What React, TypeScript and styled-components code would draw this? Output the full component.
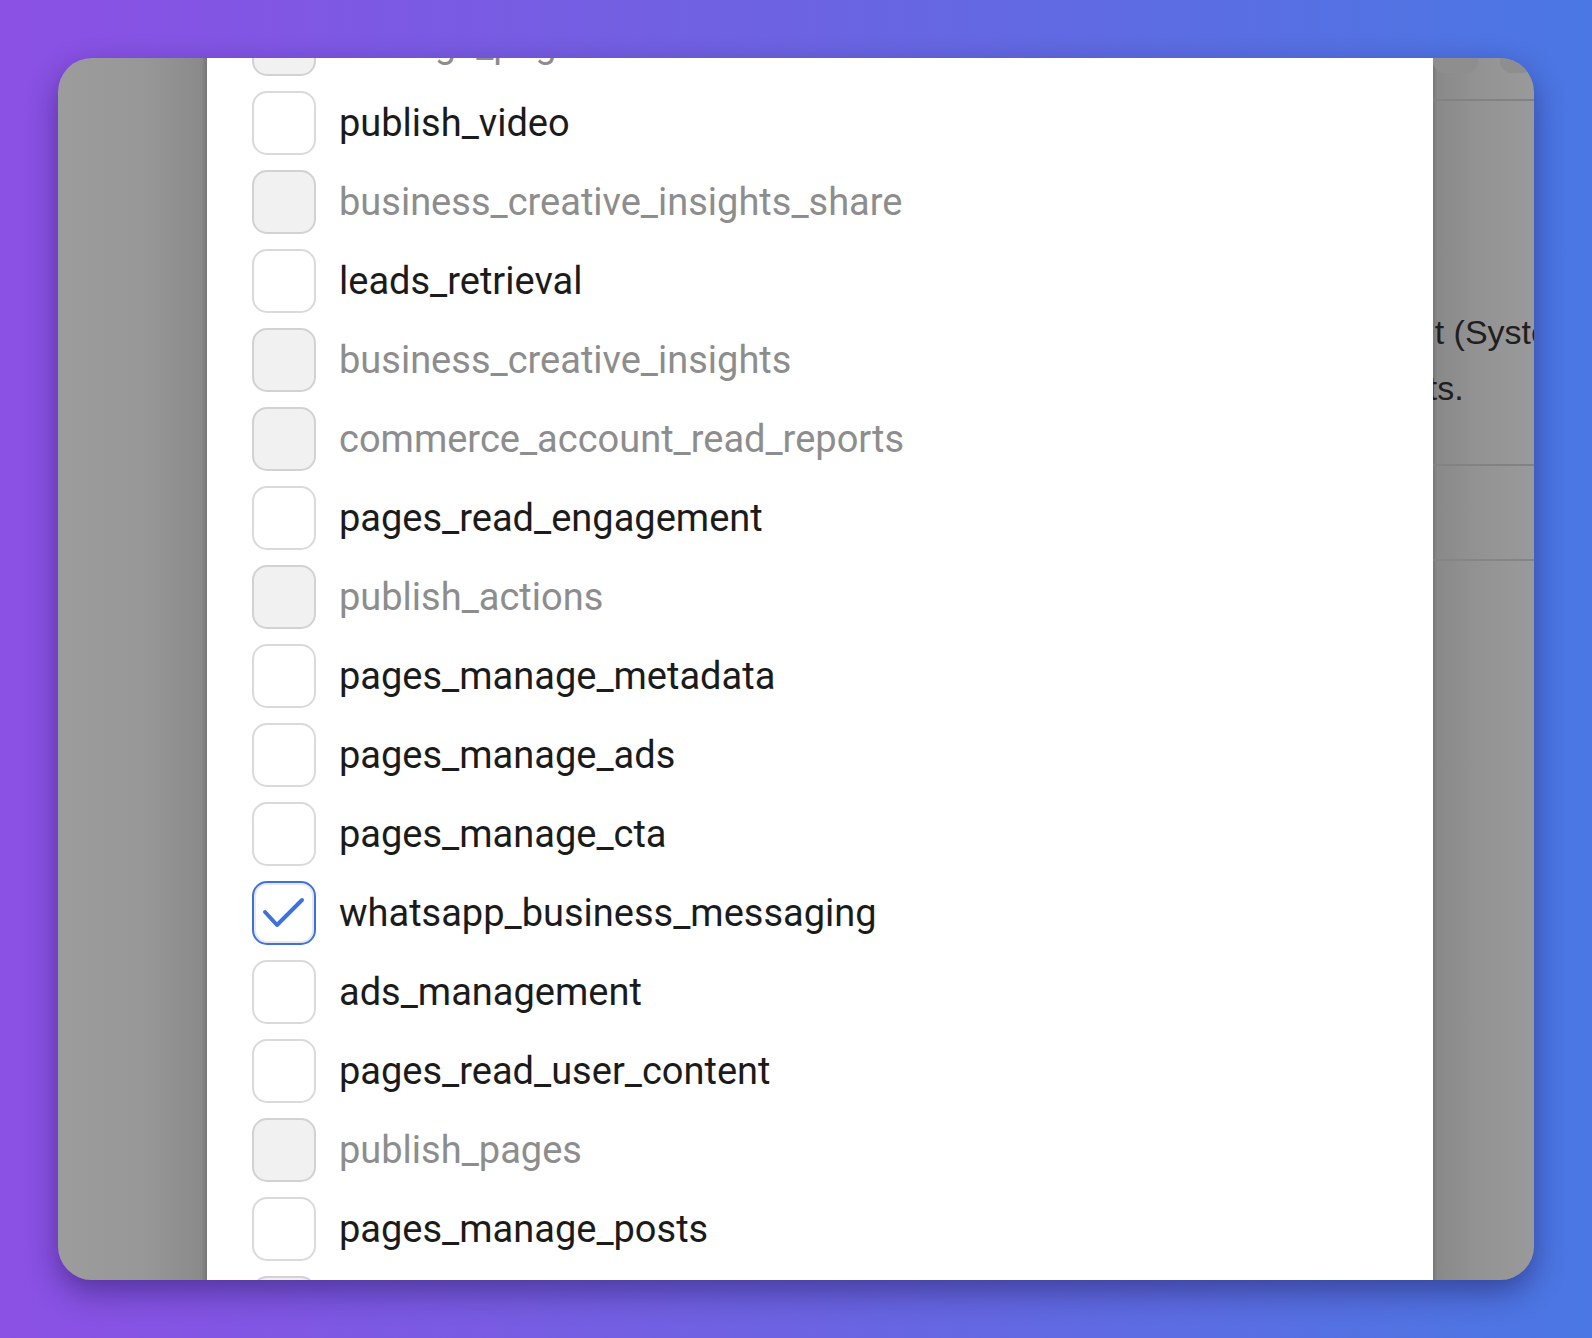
import * as React from "react";
import styled, { createGlobalStyle } from "styled-components";

const GlobalStyle = createGlobalStyle`
  html, body {
    margin: 0;
    padding: 0;
  }
  body {
    width: 1592px;
    height: 1338px;
    overflow: hidden;
    font-family: Roboto, "Liberation Sans", sans-serif;
  }
`;

const Page = styled.div`
  width: 1592px;
  height: 1338px;
  box-sizing: border-box;
  padding: 58px;
  background: linear-gradient(90deg, #8b50e4 0%, #6c63e2 50%, #4a77e3 100%);
`;

const Window = styled.div`
  display: flex;
  height: 100%;
  border-radius: 34px;
  overflow: hidden;
  box-shadow: 0 12px 30px rgba(25, 15, 70, 0.45);
`;

const LeftPane = styled.div`
  width: 149px;
  flex-shrink: 0;
  background: linear-gradient(90deg, #9c9c9c 0%, #979797 60%, #8a8a8a 96%, #767676 100%);
`;

const Modal = styled.div`
  flex: 1;
  background: #ffffff;
  overflow: hidden;
  padding-left: 45px;
`;

const List = styled.ul`
  list-style: none;
  margin: -54px 0 0;
  padding: 0;
`;

const Row = styled.li`
  display: flex;
  align-items: center;
  gap: 23px;
  height: 79px;
`;

const Box = styled.span<{ $disabled?: boolean; $checked?: boolean }>`
  box-sizing: border-box;
  width: 64px;
  height: 64px;
  flex-shrink: 0;
  border-radius: 15px;
  display: flex;
  align-items: center;
  justify-content: center;
  border: 2px solid
    ${({ $checked, $disabled }) =>
      $checked ? "#3f70e0" : $disabled ? "#d2d2d2" : "#dadada"};
  background: ${({ $disabled }) => ($disabled ? "#f1f1f1" : "#ffffff")};
  box-shadow: ${({ $checked }) =>
    $checked ? "inset 0 0 0 2px #e9e9e9" : "none"};
`;

const Label = styled.span<{ $disabled?: boolean }>`
  font-size: 38px;
  line-height: 1;
  color: ${({ $disabled }) => ($disabled ? "#8d8d8d" : "#1b1b1b")};
  white-space: nowrap;
`;

const RightPane = styled.div`
  width: 101px;
  flex-shrink: 0;
  overflow: hidden;
  display: flex;
  flex-direction: column;
  background: linear-gradient(90deg, #767676 0%, #898989 4%, #929292 40%, #9a9a9a 100%);
  font-family: "Liberation Sans", Arial, sans-serif;
`;

const TopBar = styled.div`
  height: 41px;
  flex-shrink: 0;
  display: flex;
  gap: 22px;
  border-bottom: 2px solid #828282;
`;

const Pill = styled.span<{ $w: number }>`
  width: ${({ $w }) => $w}px;
  height: 15px;
  background: #8e8e8e;
  border-radius: 0 0 12px 12px;
`;

const Blurb = styled.div`
  padding-top: 203px;
  height: 160px;
  flex-shrink: 0;
  font-size: 34px;
  line-height: 56px;
  color: #1f1f1f;
  border-bottom: 2px solid #828282;
`;

const BlurbLine = styled.div<{ $shift: number }>`
  white-space: nowrap;
  margin-left: ${({ $shift }) => $shift}px;
`;

const Strip = styled.div`
  height: 93px;
  flex-shrink: 0;
  border-bottom: 2px solid #858585;
`;

type Perm = { name: string; disabled?: boolean; checked?: boolean };

const perms: Perm[] = [
  { name: "manage_pages", disabled: true },
  { name: "publish_video" },
  { name: "business_creative_insights_share", disabled: true },
  { name: "leads_retrieval" },
  { name: "business_creative_insights", disabled: true },
  { name: "commerce_account_read_reports", disabled: true },
  { name: "pages_read_engagement" },
  { name: "publish_actions", disabled: true },
  { name: "pages_manage_metadata" },
  { name: "pages_manage_ads" },
  { name: "pages_manage_cta" },
  { name: "whatsapp_business_messaging", checked: true },
  { name: "ads_management" },
  { name: "pages_read_user_content" },
  { name: "publish_pages", disabled: true },
  { name: "pages_manage_posts" },
  { name: "read_insights", disabled: true },
];

function Check() {
  return (
    <svg width="60" height="60" viewBox="0 0 60 60" fill="none">
      <polyline
        points="11,29 23,42 48,17"
        stroke="#3f70e0"
        strokeWidth="4"
        strokeLinecap="round"
        strokeLinejoin="round"
      />
    </svg>
  );
}

export default function App() {
  return (
    <>
      <GlobalStyle />
      <Page>
        <Window>
          <LeftPane />
          <Modal>
            <List>
              {perms.map((p) => (
                <Row key={p.name}>
                  <Box $disabled={p.disabled} $checked={p.checked}>
                    {p.checked && <Check />}
                  </Box>
                  <Label $disabled={p.disabled}>{p.name}</Label>
                </Row>
              ))}
            </List>
          </Modal>
          <RightPane>
            <TopBar>
              <Pill $w={54} />
              <Pill $w={40} />
            </TopBar>
            <Blurb>
              <BlurbLine $shift={-55}>ount (System User) for the</BlurbLine>
              <BlurbLine $shift={-77}>assets.</BlurbLine>
            </Blurb>
            <Strip />
          </RightPane>
        </Window>
      </Page>
    </>
  );
}
